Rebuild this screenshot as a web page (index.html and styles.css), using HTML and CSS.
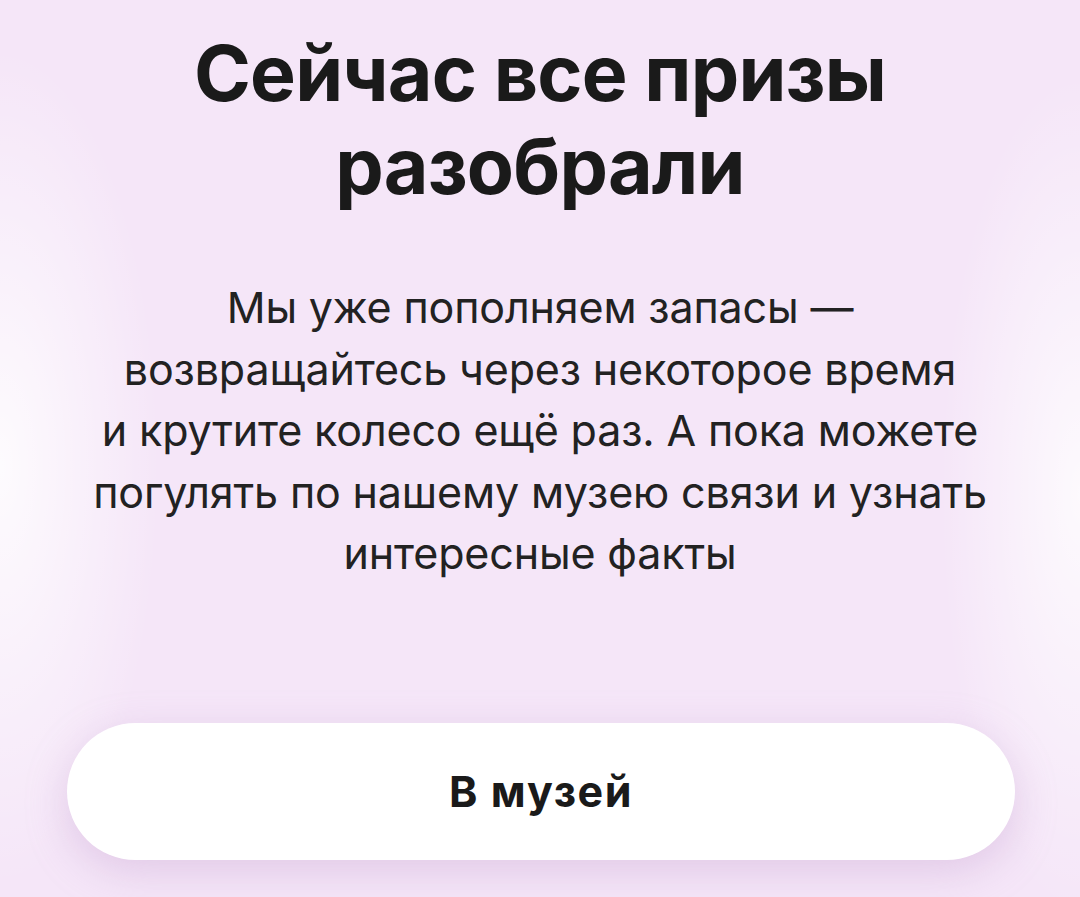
FILE: index.html
```html
<!DOCTYPE html>
<html lang="ru">
<head>
<meta charset="utf-8">
<link rel="stylesheet" href="styles.css">
</head>
<body>
<main class="screen">
  <h1 class="title">Сейчас все призы<br>разобрали</h1>
  <p class="text">Мы уже пополняем запасы —<br>возвращайтесь через некоторое время<br>и крутите колесо ещё раз. А пока можете<br>погулять по нашему музею связи и узнать<br>интересные факты</p>
  <div class="actions">
    <button class="btn">В музей</button>
  </div>
</main>
</body>
</html>
```
FILE: styles.css
```css
html, body {
  margin: 0;
  padding: 0;
  height: 100%;
}
body {
  background:
    radial-gradient(ellipse 160px 420px at 0% 52%, rgba(255,255,255,0.85), rgba(255,255,255,0) 100%),
    radial-gradient(ellipse 140px 420px at 100% 55%, rgba(255,255,255,0.8), rgba(255,255,255,0) 100%),
    #f5e6f8;
  font-family: Inter, "Noto Sans", sans-serif;
  color: #1d1d1f;
  overflow: hidden;
}
.screen {
  width: 1080px;
  height: 897px;
  display: flex;
  flex-direction: column;
  align-items: center;
}
.title {
  margin: 27px 0 0;
  font-size: 77px;
  line-height: 93px;
  font-weight: 700;
  letter-spacing: -0.8px;
  text-align: center;
  color: #1a1a1a;
}
.text {
  margin: 64px 0 0;
  font-size: 43px;
  line-height: 61.5px;
  font-weight: 400;
  text-align: center;
  color: #222;
  letter-spacing: -0.15px;
}
.actions {
  margin-top: 138px;
  display: flex;
  justify-content: center;
  width: 100%;
}
.btn {
  width: 948px;
  height: 137px;
  margin-left: 2px;
  border: none;
  border-radius: 69px;
  background: #fff;
  box-shadow: 0 12px 40px rgba(190, 150, 200, 0.35);
  font-family: Inter, "Noto Sans", sans-serif;
  font-size: 43px;
  font-weight: 700;
  color: #1a1a1a;
  letter-spacing: 1.5px;
}
```
